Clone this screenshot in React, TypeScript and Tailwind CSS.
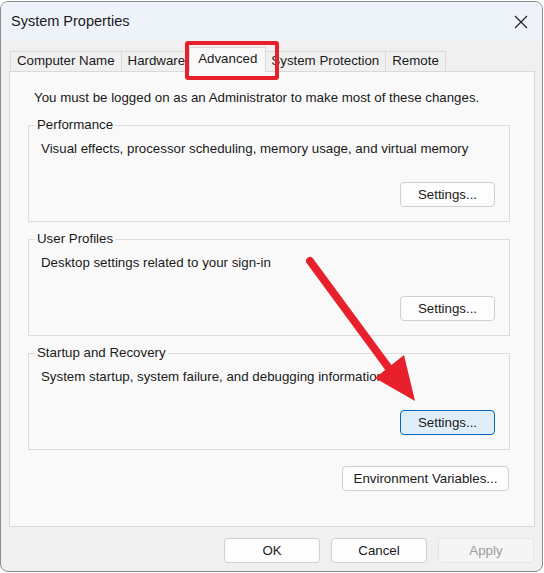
import React from "react";

const tabs = ["Computer Name", "Hardware", "Advanced", "System Protection", "Remote"];

function Btn({ label, focused, disabled, w = "w-[96px]" }: { label: string; focused?: boolean; disabled?: boolean; w?: string }) {
  const look = focused
    ? "bg-[#e0eef9] border-[#0067c0] text-[#1a1a1a]"
    : disabled
    ? "bg-[#f5f5f5] border-[#e5e5e5] text-[#9d9d9d]"
    : "bg-[#fdfdfd] border-[#d0d0d0] text-[#1a1a1a]";
  return (
    <div className={`${w} h-[25px] border rounded-[4px] flex items-center justify-center ${look}`}>
      {label}
    </div>
  );
}

function Group({ title, text }: { title: string; text: string }) {
  return (
    <div className="relative ml-[18px] mr-[24px] h-[97px] border border-[#dcdcdc] pt-[15px] pl-[12px] pr-[14px] flex flex-col">
      <span className="absolute -top-[9px] left-[6px] px-[2px] bg-[#f9f9f9] leading-[16px]">{title}</span>
      <p className="leading-[16px]">{text}</p>
    </div>
  );
}

export default function App() {
  return (
    <div className="relative w-[544px] h-[573px] bg-white font-['Liberation_Sans',Arial,sans-serif] text-[13.3px] text-[#1a1a1a]">
      <div className="mt-[1px] w-[543px] h-[571px] border border-[#8c8c8c] rounded-[8px] overflow-hidden flex flex-col bg-[#f0f0f0]">
        {/* title bar */}
        <div className="h-[39px] bg-[#eef3f9] flex items-center justify-between pl-[10px] pr-[12px]">
          <span className="text-[14.5px] mt-[1px]">System Properties</span>
          <svg width="14" height="14" viewBox="0 0 14 14" className="mr-[2px]">
            <path d="M1 1 L13 13 M13 1 L1 13" stroke="#1a1a1a" strokeWidth="1.1" />
          </svg>
        </div>

        <div className="flex-1 pl-[8px] pr-[7px] flex flex-col">
          {/* tabs */}
          <div className="flex items-end h-[30px] pl-[1px]">
            {tabs.map((t) =>
              t === "Advanced" ? (
                <div
                  key={t}
                  className="relative z-10 -mx-[2px] -mb-px h-[25px] px-[8px] pb-[3px] flex items-center bg-[#f9f9f9] border border-b-0 border-[#d9d9d9]"
                >
                  {t}
                </div>
              ) : (
                <div
                  key={t}
                  className="h-[20px] px-[6px] pb-[1px] flex items-center bg-[#f0f0f0] border border-b-0 border-r-0 last:border-r border-[#d9d9d9]"
                >
                  {t}
                </div>
              )
            )}
          </div>

          {/* panel */}
          <div className="h-[456px] border border-[#d9d9d9] bg-[#f9f9f9] flex flex-col">
            <p className="pt-[18px] pl-[24px] leading-[16px]">
              You must be logged on as an Administrator to make most of these changes.
            </p>

            <div className="mt-[19px] flex flex-col gap-[17px]">
              <div className="relative">
                <Group title="Performance" text="Visual effects, processor scheduling, memory usage, and virtual memory" />
                <div className="absolute right-[39px] top-[57px]"><Btn label="Settings..." w="w-[95px]" /></div>
              </div>
              <div className="relative">
                <Group title="User Profiles" text="Desktop settings related to your sign-in" />
                <div className="absolute right-[39px] top-[57px]"><Btn label="Settings..." w="w-[95px]" /></div>
              </div>
              <div className="relative">
                <Group title="Startup and Recovery" text="System startup, system failure, and debugging information" />
                <div className="absolute right-[39px] top-[57px]"><Btn label="Settings..." focused w="w-[95px]" /></div>
              </div>
            </div>

            <div className="mt-[16px] flex justify-end pr-[25px]">
              <Btn label="Environment Variables..." w="w-[167px]" />
            </div>
          </div>

          {/* bottom buttons */}
          <div className="mt-[11px] mr-[1px] flex justify-end gap-[11px]">
            <Btn label="OK" />
            <Btn label="Cancel" />
            <Btn label="Apply" disabled />
          </div>
        </div>
      </div>

      {/* annotations */}
      <div className="absolute left-[185px] top-[40px] w-[94px] h-[39px] border-[4px] border-[#e8202b] rounded-[3px] pointer-events-none" />
      <svg className="absolute left-0 top-0 pointer-events-none" width="544" height="573">
        <line x1="310" y1="260" x2="388" y2="366" stroke="#e8202b" strokeWidth="8" strokeLinecap="round" />
        <polygon points="375,377 404,354 415,400" fill="#e8202b" />
      </svg>
    </div>
  );
}
